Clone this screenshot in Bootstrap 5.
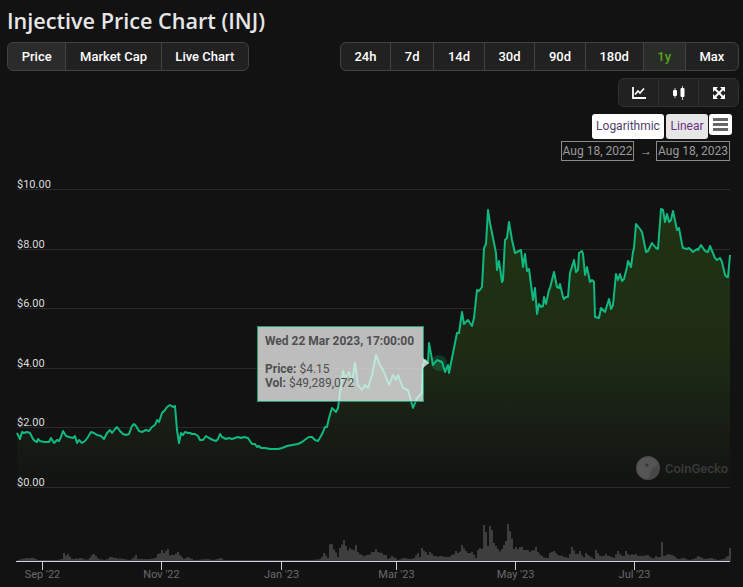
<!DOCTYPE html>
<html lang="en">
<head>
<meta charset="UTF-8">
<meta name="viewport" content="width=device-width, initial-scale=1.0">
<title>Injective Price Chart (INJ)</title>
<link href="https://cdn.jsdelivr.net/npm/bootstrap@5.3.1/dist/css/bootstrap.min.css" rel="stylesheet">
<style>
    body {
        background: #121212;
        font-family: Roboto, "Open Sans", sans-serif;
        overflow: hidden;
        height: 587px;
    }
    .page-head { padding: 0 4px 0 7px; }
    h1.chart-title {
        font-family: "Open Sans", "Noto Sans", sans-serif;
        font-size: 21.6px;
        font-weight: 600;
        color: #e6e6e6;
        line-height: 28px;
        margin: 0;
        padding: 7px 0 7px;
    }
    .tool-row { margin-top: 7px; }
    .btn-chart {
        --bs-btn-padding-x: 13.7px;
        --bs-btn-padding-y: 0;
        --bs-btn-font-size: 13px;
        --bs-btn-font-weight: 500;
        --bs-btn-color: #fff;
        --bs-btn-bg: #212121;
        --bs-btn-border-color: #424242;
        --bs-btn-border-radius: 6px;
        --bs-btn-hover-color: #fff;
        --bs-btn-hover-bg: #2b2b2b;
        --bs-btn-hover-border-color: #424242;
        height: 29px;
        line-height: 27px;
    }
    .btn-chart.on { background: #2b2b2b; }
    .btn-chart.range-on { background: #2a2c29; color: #56a51d; }
    .icon-group .btn-chart { width: 41px; padding: 0; display: flex; align-items: center; justify-content: center; border-color: #303030; }
    .scale-row { gap: 2px; padding-right: 7px; }
    .scale-btn {
        font-size: 12px;
        background: #fff;
        border-radius: 3px;
        height: 25px;
        line-height: 25px;
        text-align: center;
        color: #4f3f6b;
    }
    .scale-btn.log { width: 72px; }
    .scale-btn.lin { width: 42px; background: #e6e6e6; color: #6a2f82; }
    .menu-btn {
        width: 23px;
        height: 21px;
        background: #fff;
        border-radius: 3px;
        padding: 4px;
        margin-left: -1px;
    }
    .menu-btn span { display: block; height: 3px; background: #666; margin-bottom: 2px; }
    .date-row { gap: 6px; padding-right: 9px; margin-top: 2px; }
    .date-box {
        font-size: 12px;
        color: #9a9a9a;
        border: 1px solid #8a8a8a;
        height: 20px;
        line-height: 18px;
        text-align: center;
    }
    .date-arrow { color: #aaa; font-size: 12px; line-height: 20px; width: 10px; text-align: center; }
    .chart-wrap { position: relative; height: 422px; margin-top: 4px; }
    .chart-wrap svg.chart { display: block; }
    .chart-wrap text { font-family: Roboto, "Open Sans", sans-serif; }
    .hc-tooltip {
        position: absolute;
        left: 257px;
        top: 161px;
        width: 167px;
        height: 76px;
        background: rgba(247, 247, 247, .75);
        border: 1px solid #1f9a72;
        color: #4f4f4f;
        font-size: 12px;
        line-height: 14px;
        padding: 7px;
    }
    .hc-tooltip::after {
        content: "";
        position: absolute;
        left: 165px;
        top: 31px;
        border-left: 6px solid rgba(247, 247, 247, .75);
        border-top: 5px solid transparent;
        border-bottom: 5px solid transparent;
    }
    .hc-tooltip .tip-date { font-weight: 700; margin-bottom: 14px; display: block; white-space: nowrap; }
</style>
</head>
<body>
    <div class="page-head">
        <h1 class="chart-title">Injective Price Chart (INJ)</h1>
        <div class="d-flex justify-content-between">
            <div class="btn-group">
                <button class="btn btn-chart on">Price</button>
                <button class="btn btn-chart">Market Cap</button>
                <button class="btn btn-chart">Live Chart</button>
            </div>
            <div class="btn-group">
                <button class="btn btn-chart">24h</button>
                <button class="btn btn-chart">7d</button>
                <button class="btn btn-chart">14d</button>
                <button class="btn btn-chart">30d</button>
                <button class="btn btn-chart">90d</button>
                <button class="btn btn-chart">180d</button>
                <button class="btn btn-chart range-on">1y</button>
                <button class="btn btn-chart">Max</button>
            </div>
        </div>
        <div class="d-flex justify-content-end tool-row">
            <div class="btn-group icon-group">
                <button class="btn btn-chart" aria-label="Line chart">
                    <svg width="14" height="12" viewBox="0 0 14 12"><path d="M1 0v11h13" fill="none" stroke="#fff" stroke-width="1.8"/><path d="M3 7.500 6 4l2 2 4-4.500" fill="none" stroke="#fff" stroke-width="1.700"/></svg>
                </button>
                <button class="btn btn-chart" aria-label="Candlestick chart">
                    <svg width="14" height="14" viewBox="0 0 14 14"><path d="M3 2v10M10.500 0v14" stroke="#ccc" stroke-width="1"/><rect x="1" y="4" width="4" height="6" rx="1" fill="#fff"/><rect x="8.500" y="2" width="4" height="9" rx="1" fill="#fff"/></svg>
                </button>
                <button class="btn btn-chart" aria-label="Fullscreen">
                    <svg width="12" height="12" viewBox="0 0 12 12"><path d="M0 0h5L0 5zM12 0v5L7 0zM0 12V7l5 5zM12 12H7l5-5z" fill="#fff"/><path d="M2 2l8 8M10 2l-8 8" stroke="#fff" stroke-width="2"/></svg>
                </button>
            </div>
        </div>
        <div class="d-flex justify-content-end align-items-start tool-row scale-row">
            <div class="scale-btn log">Logarithmic</div>
            <div class="scale-btn lin">Linear</div>
            <div class="menu-btn"><span></span><span></span><span></span></div>
        </div>
        <div class="d-flex justify-content-end date-row">
            <div class="date-box" style="width:73px">Aug 18, 2022</div>
            <div class="date-arrow">→</div>
            <div class="date-box" style="width:74px">Aug 18, 2023</div>
        </div>
    </div>

    <div class="chart-wrap">
        <svg class="chart" id="chart" width="743" height="422" viewBox="0 165 743 422" xmlns="http://www.w3.org/2000/svg">
            <defs>
                <linearGradient id="areaFill" gradientUnits="userSpaceOnUse" x1="0" y1="209" x2="0" y2="487">
                    <stop offset="0" stop-color="#203312"/>
                    <stop offset=".5" stop-color="#1e2c14"/>
                    <stop offset=".75" stop-color="#181f15"/>
                    <stop offset="1" stop-color="#121312"/>
                </linearGradient>
            </defs>
            <g id="grid" stroke="#2a2a2a" stroke-width="1"></g>
            <path id="area" fill="url(#areaFill)"></path>
            <g id="volume" fill="#3e3e3e"></g>
            <path id="line" fill="none" stroke="#10b981" stroke-width="2" stroke-linejoin="round"></path>
            <circle cx="439" cy="363" r="8" fill="#10b981" fill-opacity=".22"></circle>
            <g id="yLabels" font-size="11" fill="#dcdcdc"></g>
            <g id="xAxis"></g>
            <g>
                <circle cx="648" cy="468" r="12" fill="#484848"></circle>
                <path d="M648 457a11 11 0 0 1 10 7c-2 4-6 3-7 7-1 3-1 5-3 8a11 11 0 0 1 0-22z" fill="#555"></path>
                <circle cx="647" cy="465" r="1.500" fill="#333"></circle>
                <text x="665" y="473" font-size="13" fill="#3b3b3b" font-weight="500">CoinGecko</text>
            </g>
        </svg>
        <div class="hc-tooltip">
            <span class="tip-date">Wed 22 Mar 2023, 17:00:00</span>
            <div><b>Price:</b> $4.15</div>
            <div><b>Vol:</b> $49,289,072</div>
        </div>
    </div>
    <script src="https://cdn.jsdelivr.net/npm/bootstrap@5.3.1/dist/js/bootstrap.bundle.min.js"></script>
    <script>
        const NS = "http://www.w3.org/2000/svg";
        function el(parent, name, attrs, txt) {
            const n = document.createElementNS(NS, name);
            for (const k in attrs) n.setAttribute(k, attrs[k]);
            if (txt) n.textContent = txt;
            parent.appendChild(n);
            return n;
        }

        // price line, read off the picture
        const pts = [[17,433],[20,439],[22,432],[24,433],[27,432],[30,433],[33,439],[35,441],[37,442],[38,439],[40,441],[44,442],[49,442],[51,438],[54,443],[57,440],[59,441],[61,437],[63,431],[66,436],[69,437],[73,438],[75,436],[77,443],[79,440],[82,443],[85,441],[88,437],[91,432],[94,433],[97,435],[101,436],[104,439],[107,433],[110,430],[112,433],[115,429],[117,427],[120,431],[123,434],[126,435],[129,434],[132,426],[134,424],[136,426],[139,431],[142,432],[146,430],[149,431],[152,427],[155,425],[157,420],[159,422],[162,413],[165,410],[167,407],[170,405],[173,407],[175,406],[177,430],[179,443],[181,433],[183,435],[185,432],[188,433],[190,433],[192,434],[195,434],[198,436],[200,440],[203,440],[206,436],[209,438],[213,440],[216,441],[218,439],[220,434],[222,437],[226,439],[229,438],[232,439],[235,438],[238,437],[241,438],[244,437],[248,438],[250,441],[252,444],[255,444],[257,447],[259,446],[261,448],[265,448],[270,449],[274,449],[278,449],[282,448],[287,446],[292,445],[298,444],[302,442],[306,439],[309,437],[312,437],[315,440],[318,441],[321,436],[323,432],[325,427],[327,427],[329,418],[332,408],[336,412],[338,408],[340,393],[343,371],[345,378],[349,372],[352,383],[355,363],[358,385],[362,390],[365,385],[368,388],[372,375],[376,355],[380,365],[384,372],[389,385],[393,375],[396,380],[398,375],[403,388],[408,390],[413,408],[417,398],[422,393],[423,365],[425,360],[428,363],[429,343],[433,365],[437,360],[442,362],[445,372],[448,365],[449,373],[453,353],[457,333],[459,333],[462,312],[464,324],[468,320],[472,326],[474,318],[477,290],[479,291],[482,287],[484,248],[486,244],[488,210],[490,223],[496,253],[497,270],[499,261],[502,282],[503,280],[505,240],[507,238],[509,222],[512,240],[515,253],[521,250],[523,267],[525,254],[527,271],[529,269],[533,300],[535,288],[537,314],[539,304],[541,307],[543,306],[544,297],[546,304],[549,290],[550,288],[554,272],[557,287],[559,288],[560,284],[563,297],[564,299],[566,297],[568,297],[570,273],[574,260],[576,272],[578,270],[579,253],[582,251],[583,254],[585,275],[587,267],[590,282],[592,280],[594,282],[595,317],[599,318],[601,308],[605,312],[609,299],[611,309],[613,305],[616,274],[618,280],[620,274],[622,281],[624,279],[627,267],[628,261],[631,267],[633,252],[634,248],[636,224],[640,229],[642,232],[646,252],[648,251],[652,243],[656,248],[658,249],[661,209],[663,210],[665,222],[667,214],[669,222],[671,220],[673,211],[677,230],[679,228],[682,244],[683,248],[687,249],[689,248],[693,252],[697,249],[698,250],[701,245],[705,251],[708,252],[710,246],[715,258],[717,260],[720,258],[722,262],[725,275],[727,277],[728,277],[730,255]];
        const d = "M" + pts.map(p => p.join(" ")).join("L");
        document.getElementById("line").setAttribute("d", d);
        document.getElementById("area").setAttribute("d", d + "L730 487L17 487Z");

        // price gridlines and labels
        const grid = document.getElementById("grid");
        const yLabels = document.getElementById("yLabels");
        [[189,"$10.00"],[249,"$8.00"],[308,"$6.00"],[368,"$4.00"],[427,"$2.00"],[487,"$0.00"]].forEach(([y, t]) => {
            el(grid, "line", {x1: 17, x2: 730, y1: y + .5, y2: y + .5});
            el(yLabels, "text", {x: 17, y: y - 1}, t);
        });

        // volume bars: envelope read off the picture, peaks kept, the rest jittered
        const vol = [[17,1],[25,3],[33,3],[37,1],[55,1],[62,2],[63,8],[66,4],[68,7],[70,2],[80,3],[86,1],[92,6],[93,7],[98,2],[104,1],[110,4],[115,3],[123,2],[130,1],[135,6],[137,2],[150,2],[157,4],[158,7],[162,11],[163,8],[167,12],[168,6],[173,6],[177,9],[180,5],[183,2],[187,4],[193,1],[207,2],[212,1],[220,3],[223,1],[280,1],[310,1],[320,2],[323,8],[327,3],[330,17],[332,15],[337,4],[340,13],[343,21],[346,12],[349,13],[352,10],[355,16],[358,8],[362,5],[367,6],[372,9],[375,12],[380,8],[385,6],[387,2],[392,5],[397,1],[403,3],[412,2],[417,8],[420,2],[422,13],[427,6],[429,9],[433,5],[440,5],[447,4],[452,6],[455,10],[458,8],[462,16],[466,8],[468,8],[472,9],[475,3],[477,11],[480,13],[482,10],[484,36],[487,15],[490,35],[493,18],[497,12],[500,9],[503,16],[505,20],[508,37],[510,26],[513,12],[516,14],[520,14],[525,11],[527,11],[530,9],[535,14],[537,9],[542,4],[547,3],[550,8],[553,10],[557,6],[562,5],[567,3],[572,14],[575,7],[579,10],[582,3],[586,8],[590,4],[593,2],[596,11],[600,4],[605,7],[613,3],[617,10],[622,4],[626,10],[628,6],[635,7],[640,5],[647,6],[652,2],[655,5],[659,4],[662,19],[663,5],[668,7],[673,5],[677,2],[683,3],[688,1],[693,2],[698,5],[703,2],[710,3],[717,1],[723,2],[727,5],[730,13]];
        const volume = document.getElementById("volume");
        let seg = 0;
        for (let x = 17, i = 0; x < 730; x += 2, i++) {
            while (seg < vol.length - 2 && vol[seg + 1][0] <= x) seg++;
            const [x0, h0] = vol[seg], [x1, h1] = vol[seg + 1];
            const jitter = 0.85 + 0.2 * ((i * 7) % 5) / 4;
            let h = (h0 + (h1 - h0) * (x - x0) / (x1 - x0)) * jitter;
            vol.forEach(([vx, vh]) => { if (vx >= x && vx < x + 2) h = Math.max(h, vh); });
            h = Math.max(1, h);
            el(volume, "rect", {x: x, y: 561 - h, width: 2, height: h});
        }

        // time axis
        const xAxis = document.getElementById("xAxis");
        el(xAxis, "line", {x1: 16, x2: 730, y1: 561.5, y2: 561.5, stroke: "#ccd0e0"});
        [[42.5,"Sep '22"],[161.5,"Nov '22"],[281.5,"Jan '23"],[396.5,"Mar '23"],[515.5,"May '23"],[634.5,"Jul '23"]].forEach(([x, t]) => {
            el(xAxis, "line", {x1: x, x2: x, y1: 562, y2: 570, stroke: "#ccd0e0"});
            el(xAxis, "text", {x: x, y: 578, "text-anchor": "middle", "font-size": 11, fill: "#6a6a6a"}, t);
        });
    </script>
</body>
</html>
